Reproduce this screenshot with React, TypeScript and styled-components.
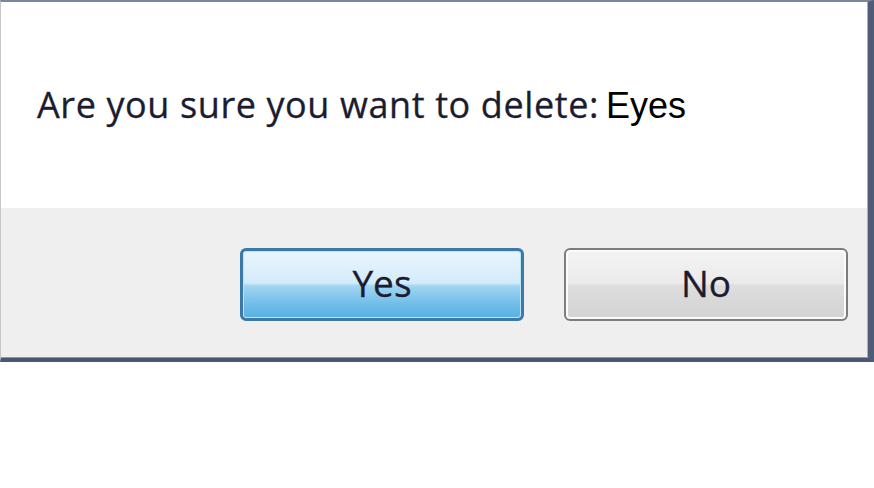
import React from 'react'
import styled, { createGlobalStyle, css } from 'styled-components'

const GlobalStyle = createGlobalStyle`
  html, body {
    margin: 0;
    padding: 0;
    background: #ffffff;
  }
  body {
    font-family: "Open Sans", "Noto Sans", sans-serif;
  }
`

const Window = styled.div`
  width: 874px;
  box-sizing: border-box;
  display: flex;
  flex-direction: column;
  border-top: 2px solid #7c8599;
  border-left: 1px solid #c4c6cb;
  border-right: 6px solid #4e5c78;
  border-bottom: 4px solid #4b5874;
`

const Body = styled.div`
  height: 206px;
  background: #ffffff;
  display: flex;
  align-items: center;
  padding-left: 36px;
  border-right: 1px solid #a9b2c0;
`

const Message = styled.p`
  margin: 0;
  font-size: 36px;
  font-weight: 500;
  line-height: 40px;
  letter-spacing: 0.6px;
  color: #1c1c30;
  -webkit-text-stroke: 0.3px #1c1c30;
`

const Subject = styled.span`
  font-family: "Liberation Sans", Arial, sans-serif;
  font-size: 36px;
  font-weight: 400;
  letter-spacing: 0;
  color: #000000;
  -webkit-text-stroke: 0;
  margin-left: 7px;
`

const Footer = styled.div`
  height: 150px;
  box-sizing: border-box;
  padding-top: 4px;
  background: #f0eff0;
  display: flex;
  justify-content: flex-end;
  align-items: center;
  gap: 40px;
  padding-right: 19px;
  border-right: 1px solid #a9b2c0;
  border-bottom: 1px solid #8d97aa;
`

const Button = styled.button<{ $primary?: boolean }>`
  width: 284px;
  height: 73px;
  box-sizing: border-box;
  border-radius: 6px;
  font-family: "Open Sans", "Noto Sans", sans-serif;
  font-size: 37px;
  color: #1c1c30;
  -webkit-text-stroke: 0.3px #1c1c30;
  padding: 0 0 4px;
  cursor: default;
  ${({ $primary }) =>
    $primary
      ? css`
          border: 3px solid #3a79a8;
          background: linear-gradient(
            to bottom,
            #e9f5fc 0%,
            #d3ecfa 48%,
            #a2d5f2 52%,
            #6fbde8 80%,
            #58b0e2 100%
          );
          box-shadow: inset 0 0 0 1px #bfe3f7;
        `
      : css`
          border: 2px solid #7d7d7d;
          background: linear-gradient(
            to bottom,
            #f3f3f3 0%,
            #ebebeb 48%,
            #dddddd 52%,
            #d3d3d3 100%
          );
          box-shadow: inset 0 0 0 2px #fbfbfb;
        `}
`

export default function App() {
  return (
    <>
      <GlobalStyle />
      <Window>
        <Body>
          <Message>
            Are you sure you want to delete:<Subject>Eyes</Subject>
          </Message>
        </Body>
        <Footer>
          <Button $primary>Yes</Button>
          <Button>No</Button>
        </Footer>
      </Window>
    </>
  )
}
